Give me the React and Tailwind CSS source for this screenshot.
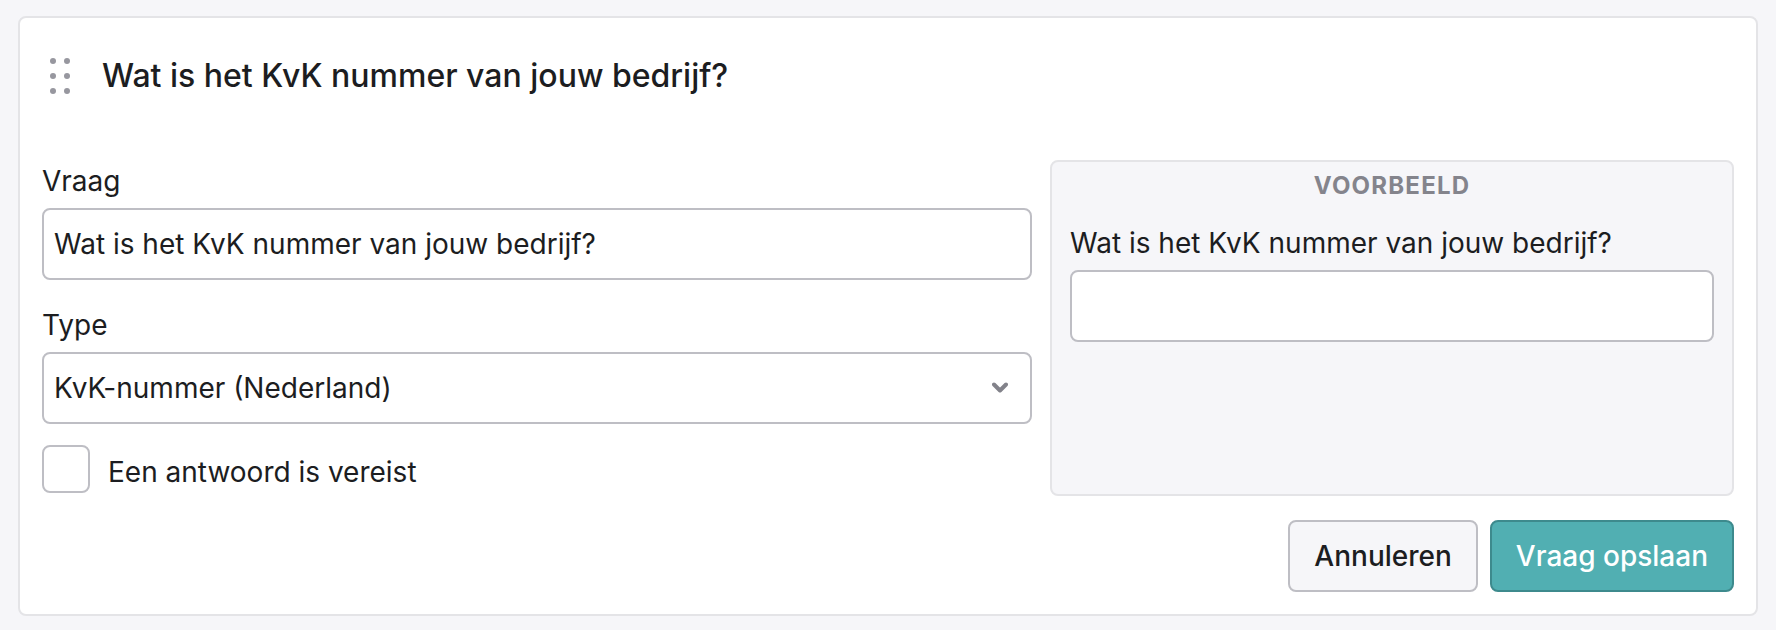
import { useState } from "react";

const fieldClass =
  "block w-full h-[72px] bg-white border-2 border-[#bebec4] rounded-lg px-[10px] text-[28px] leading-[42px] text-[#1c1d21] outline-none focus:border-[#51afb2]";

const labelClass = "block mb-1.5 text-[28px] leading-[42px]";

function DragHandle() {
  return (
    <button type="button" aria-label="Verplaats vraag" className="cursor-grab text-[#97979f]">
      <svg width="20" height="36" viewBox="0 0 20 36" fill="currentColor">
        <circle cx="3" cy="3" r="3" />
        <circle cx="17" cy="3" r="3" />
        <circle cx="3" cy="18" r="3" />
        <circle cx="17" cy="18" r="3" />
        <circle cx="3" cy="33" r="3" />
        <circle cx="17" cy="33" r="3" />
      </svg>
    </button>
  );
}

export default function App() {
  const [question, setQuestion] = useState("Wat is het KvK nummer van jouw bedrijf?");
  const [type, setType] = useState("kvk");
  const [required, setRequired] = useState(false);

  return (
    <div className="min-h-screen bg-[#f6f6f9] px-[18px] pt-4 pb-3 font-['Inter',sans-serif] text-[#1c1d21]">
      <form
        onSubmit={(e) => e.preventDefault()}
        className="bg-white border-2 border-[#e4e4e7] rounded-lg p-[22px]"
      >
        {/* Header */}
        <div className="flex items-center gap-8 h-[72px] pl-2 mb-12">
          <DragHandle />
          <h2 className="text-[32px] leading-[48px] font-medium">{question}</h2>
        </div>

        <div className="grid grid-cols-[55fr_38fr] gap-[18px]">
          {/* Question settings */}
          <div className="pb-[3px]">
            <label htmlFor="question" className={labelClass}>Vraag</label>
            <input
              id="question"
              type="text"
              value={question}
              onChange={(e) => setQuestion(e.target.value)}
              className={fieldClass}
            />

            <label htmlFor="type" className={`${labelClass} mt-6`}>Type</label>
            <div className="relative">
              <select
                id="type"
                value={type}
                onChange={(e) => setType(e.target.value)}
                className={`${fieldClass} appearance-none`}
              >
                <option value="kvk">KvK-nummer (Nederland)</option>
              </select>
              <svg
                className="absolute right-6 top-1/2 -translate-y-1/2 pointer-events-none"
                width="16" height="12" viewBox="0 0 16 12"
                fill="none" stroke="#82828a" strokeWidth="4" strokeLinecap="round" strokeLinejoin="round"
              >
                <path d="M2 2.5 L8 8.5 L14 2.5" />
              </svg>
            </div>

            <div className="flex items-end gap-[18px] mt-[21px]">
              <input
                id="required"
                type="checkbox"
                checked={required}
                onChange={(e) => setRequired(e.target.checked)}
                className="appearance-none size-12 bg-white border-2 border-[#bebec4] rounded-lg checked:bg-[#51afb2] checked:border-[#3d8a8d]"
              />
              <label htmlFor="required" className="text-[28px] leading-[42px]">Een antwoord is vereist</label>
            </div>
          </div>

          {/* Preview */}
          <div className="bg-[#f6f6f9] border-2 border-[#e4e4e7] rounded-lg px-[18px] pt-1.5">
            <p className="mb-[18px] text-center text-[24px] leading-9 font-bold uppercase tracking-wider text-[#84848c]">
              Voorbeeld
            </p>
            <label htmlFor="preview" className={labelClass}>{question}</label>
            <input id="preview" type="text" className={fieldClass} />
          </div>
        </div>

        {/* Actions */}
        <div className="flex justify-end gap-3 mt-6">
          <button
            type="button"
            className="h-[72px] px-6 bg-[#f6f6f9] border-2 border-[#bebec4] rounded-lg text-[28px] leading-[42px] font-medium"
          >
            Annuleren
          </button>
          <button
            type="submit"
            className="h-[72px] px-6 bg-[#51afb2] border-2 border-[#3d8a8d] rounded-lg text-[28px] leading-[42px] font-medium text-white"
          >
            Vraag opslaan
          </button>
        </div>
      </form>
    </div>
  );
}
